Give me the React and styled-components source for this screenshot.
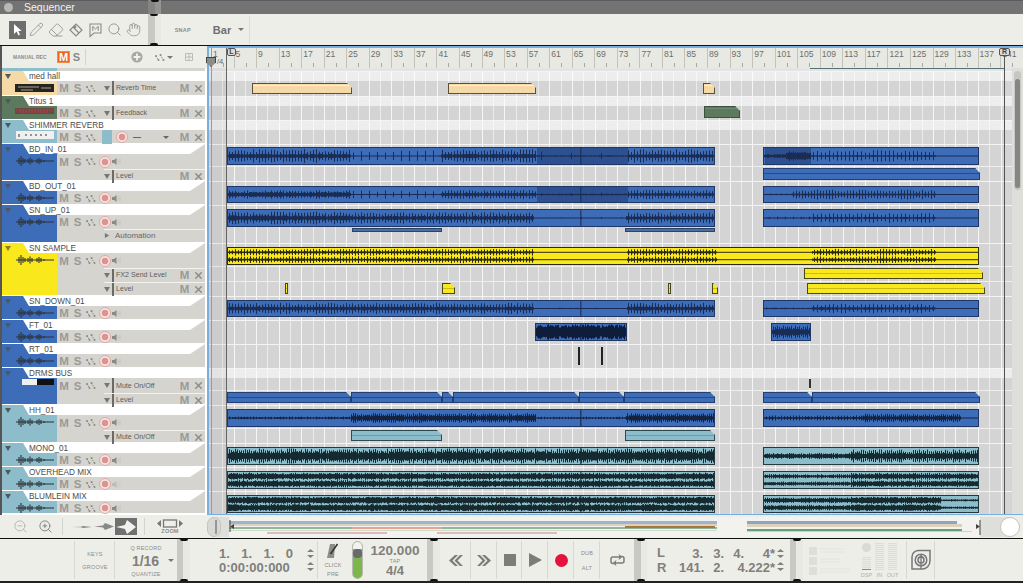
import styled, { createGlobalStyle } from "styled-components";
import { Pencil, Eraser, Search, Hand, ZoomIn, ZoomOut, X } from "lucide-react";

const GlobalStyle = createGlobalStyle`
  html, body { margin: 0; padding: 0; background: #eeeee8; overflow: hidden; }
  * { box-sizing: border-box; }
`;

const PANEL = "#d6d4ce";
const BLUE = "#3d6cb8";
const TEAL = "#8dbccb";
const TIMELINE_LEFT = 209;

const Page = styled.div`
  width: 1023px;
  height: 583px;
  display: flex;
  flex-direction: column;
  overflow: hidden;
  font-family: "Liberation Sans", Arial, sans-serif;
  background: #eeeee8;
  color: #666;
`;

/* ---- title + tools ---- */
const TitleBar = styled.div`
  height: 14px;
  flex: none;
  display: flex;
  align-items: center;
  background: linear-gradient(#5c5c5c 0 1px, #737373 1px);
  padding-left: 4px;
  color: #f2f2f2;
  font-size: 10.5px;
`;
const TitleDot = styled.span`
  width: 9px;
  height: 9px;
  border-radius: 50%;
  background: #b8b8b6;
  margin-right: 11px;
  flex: none;
`;
const TitleName = styled.span`
  width: 124px;
  flex: none;
`;
const Toolbar = styled.div`
  height: 32px;
  flex: none;
  display: flex;
  align-items: center;
  border-bottom: 1px solid #111;
  background: #eeeee8;
  padding-left: 9px;
`;
const ToolSlot = styled.div`
  width: 17px;
  height: 18px;
  margin-right: 2.4px;
  display: flex;
  align-items: center;
  justify-content: center;
  color: #8a8a86;
  background: ${(p) => (p.$active ? "#6e6e6c" : "transparent")};
  flex: none;
`;
const Groove = styled.div`
  position: relative;
  width: 13px;
  align-self: stretch;
  flex: none;
  margin-left: ${(p) => p.$before || 0}px;
  background: ${(p) =>
    p.$dark
      ? "linear-gradient(90deg, #848482 50%, #949492 50%)"
      : "linear-gradient(90deg, #c9c9c3 50%, #e9e9e3 50%)"};
  &::before, &::after {
    content: "";
    position: absolute;
    left: 50%;
    margin-left: -4px;
    width: 8px;
    height: 2px;
    background: #111;
  }
  &::before { top: 0; border-radius: 0 0 4px 4px; }
  &::after { bottom: 0; border-radius: 4px 4px 0 0; display: ${(p) => (p.$dark ? "none" : "block")}; }
`;
const TinyLabel = styled.span`
  font-size: 5.5px;
  font-weight: ${(p) => (p.$bold ? 700 : 400)};
  color: #8c8c88;
  letter-spacing: 0.2px;
  white-space: nowrap;
`;
const ManualLabel = styled(TinyLabel)`
  width: 44px;
  flex: none;
  font-size: 5px;
  letter-spacing: 0;
`;
const SnapArea = styled.div`
  display: flex;
  align-items: center;
  height: 28px;
  padding-left: 14px;
  padding-right: 5px;
  border-right: 1px solid #dcdcd6;
`;
const SnapValue = styled.span`
  font-size: 11px;
  font-weight: 700;
  color: #70706c;
  margin-left: 22px;
  margin-right: 7px;
`;
const Caret = styled.span`
  width: 0;
  height: 0;
  border-left: 3px solid transparent;
  border-right: 3px solid transparent;
  border-top: 3px solid ${(p) => p.$color || "#777"};
  flex: none;
`;

/* ---- sequencer ---- */
const Sequencer = styled.div`
  display: flex;
  height: 469px;
  flex: none;
`;
const TrackPanel = styled.div`
  width: 207px;
  flex: none;
  background: #fff;
  display: flex;
  flex-direction: column;
  border-left: 2px solid #555;
  padding-right: 2px;
`;
const PanelHeader = styled.div`
  height: 22px;
  flex: none;
  margin-right: -2px;
  display: flex;
  align-items: center;
  background: #eeeee8;
  padding-left: 11px;
`;
const ManualM = styled.span`
  width: 13px;
  height: 12px;
  flex: none;
  background: #f0641e;
  border: 1px solid #f58a4e;
  color: #fff;
  font-size: 11px;
  font-weight: 700;
  line-height: 10px;
  text-align: center;
`;
const ManualS = styled.span`
  width: 16px;
  flex: none;
  text-align: center;
  font-size: 11px;
  font-weight: 700;
  color: #8a8a86;
  border-right: 1px solid #d4d4ce;
  padding-right: 2px;
  height: 16px;
  line-height: 16px;
`;
const HeaderGap = styled.span`
  width: ${(p) => p.$w}px;
  flex: none;
`;
const TrackStub = styled.div`
  height: 3px;
  flex: none;
  background: linear-gradient(90deg, ${TEAL} 55px, ${PANEL} 55px);
`;
const TrackBox = styled.div`
  height: ${(p) => p.$height}px;
  flex: none;
  display: flex;
  flex-direction: column;
  background: #fff;
  padding-bottom: 1px;
`;
const TrackTitle = styled.div`
  height: 10px;
  flex: none;
  display: flex;
  align-items: center;
  font-size: 8.2px;
  color: #4c4c4c;
  white-space: nowrap;
`;
const TitleTab = styled.div`
  width: 27px;
  height: 10px;
  flex: none;
  background: ${(p) => p.$color};
  clip-path: polygon(0 0, 21px 0, 27px 100%, 0 100%);
  padding: 3px 0 0 3px;
`;
const Triangle = styled.span`
  display: block;
  width: 0;
  height: 0;
  border-left: 3px solid transparent;
  border-right: 3px solid transparent;
  border-top: 5px solid ${(p) => p.$color || "#666"};
  transform: ${(p) => (p.$side ? "rotate(-90deg) scale(.85)" : "none")};
`;
const TrackName = styled.span`
  flex: 1;
`;
const Chamfer = styled.div`
  width: 15px;
  height: 10px;
  background: ${PANEL};
  clip-path: polygon(100% 0, 100% 100%, 0 100%);
`;
const TrackBody = styled.div`
  flex: 1;
  display: flex;
  min-height: 0;
`;
const Swatch = styled.div`
  width: 55px;
  flex: none;
  background: ${(p) => p.$color};
  display: flex;
  justify-content: flex-end;
  padding: 1px 3px 0 0;
`;
const Controls = styled.div`
  flex: 1;
  display: flex;
  flex-direction: column;
  background: ${PANEL};
`;
const ControlRow = styled.div`
  height: ${(p) => (p.$height ? `${p.$height}px` : "auto")};
  flex: ${(p) => (p.$height ? "none" : 1)};
  display: flex;
  align-items: center;
`;
const SubRow = styled(ControlRow)`
  justify-content: flex-end;
  position: relative;
  &::before {
    content: "";
    position: absolute;
    top: 0;
    left: 47px;
    right: 0;
    height: 1px;
    background: #f2f2ee;
  }
`;
const Flag = styled.span`
  width: ${(p) => p.$w || 13}px;
  flex: none;
  text-align: center;
  font-size: 11.5px;
  font-weight: 700;
  color: #9a9a96;
  line-height: 14px;
`;
const IconSlot = styled.span`
  width: ${(p) => p.$w || 13}px;
  flex: none;
  display: flex;
  align-items: center;
  justify-content: center;
`;
const RecButton = styled.span`
  width: 12px;
  height: 12px;
  border-radius: 50%;
  border: 1px solid #e8a6a4;
  background: radial-gradient(circle, #dd9390 0 3px, #efe5e0 3.6px);
  flex: none;
`;
const LaneControls = styled.div`
  width: 103px;
  flex: none;
  margin-left: auto;
  display: flex;
  align-items: center;
  height: 100%;
`;
const LaneBar = styled.span`
  width: 2px;
  height: 100%;
  background: #6a6a68;
  margin: 0 1px 0 0;
  flex: none;
`;
const LaneLabel = styled.span`
  flex: 1;
  font-size: 7.1px;
  color: #5e5e5c;
  white-space: nowrap;
  padding-left: 1px;
`;
const AutomationLabel = styled.span`
  flex: 1;
  font-size: 8px;
  color: #666;
  padding-left: 3px;
`;
const ShimmerBlock = styled.span`
  width: 10px;
  height: 100%;
  background: ${TEAL};
  margin-right: 3px;
  flex: none;
`;
const ShimmerDash = styled.span`
  width: 8px;
  height: 1px;
  background: #666;
  margin: 0 22px 0 5px;
  flex: none;
`;
const RowFill = styled.span`
  flex: 1;
`;

/* ---- timeline ---- */
const Timeline = styled.div`
  position: relative;
  flex: 1;
  display: flex;
  flex-direction: column;
  border-top: 2px solid #78aee0;
  border-left: 2px solid #78aee0;
  border-bottom: 1px solid #78aee0;
  background: #eee;
  min-width: 0;
`;
const Ruler = styled.div`
  height: 20px;
  flex: none;
  display: flex;
  padding-left: 2px;
  background: #e9e9e3;
  overflow: hidden;
`;
const RulerCell = styled.div`
  width: 22.56px;
  flex: none;
  border-left: 1px solid #c3c3bd;
  padding: 1px 0 0 1px;
  font-size: 8.6px;
  line-height: 10px;
  color: #6e6e6a;
  background: linear-gradient(#a8a8a2, #a8a8a2) 11px 15px / 1px 4px no-repeat;
`;
const TimelineBody = styled.div`
  flex: 1;
  display: flex;
  min-height: 0;
`;
const Lanes = styled.div`
  flex: 1;
  display: flex;
  flex-direction: column;
  min-width: 0;
  overflow: hidden;
`;
const gridLines = `
  repeating-linear-gradient(90deg, transparent 0 2px, rgba(255,255,255,.8) 2px 3px, transparent 3px 22.56px),
  repeating-linear-gradient(90deg, transparent 0 13.28px, rgba(255,255,255,.55) 13.28px 14.28px, transparent 14.28px 22.56px)
`;
const LaneStub = styled.div`
  height: 3px;
  flex: none;
  background: #e4e4e4;
  position: relative;
`;
const LoopLine = styled.div`
  position: absolute;
  top: 0;
  left: ${810 - TIMELINE_LEFT}px;
  width: 194px;
  height: 1px;
  background: #56707a;
`;
const Lane = styled.div`
  position: relative;
  height: ${(p) => p.$height}px;
  flex: none;
  border-top: 1px solid #f4f4f4;
  background-image: ${gridLines},
    linear-gradient(#ededed 0 ${(p) => (p.$band ? 9 : 0)}px, #d4d4d4 ${(p) => (p.$band ? 9 : 0)}px);
`;
const LaneDivider = styled.div`
  position: absolute;
  left: 0;
  right: 0;
  top: ${(p) => p.$top}px;
  height: 1px;
  background: #efefef;
`;
const Clip = styled.div`
  position: absolute;
  left: ${(p) => p.$x - TIMELINE_LEFT}px;
  width: ${(p) => p.$w}px;
  top: ${(p) => p.$top}px;
  height: ${(p) => p.$h}px;
  background: ${(p) => p.$fill};
  border: 1px solid ${(p) => p.$edge};
  overflow: hidden;
  ${(p) => p.$chamfer && "clip-path: polygon(0 0, calc(100% - 5px) 0, 100% 5px, 100% 100%, 0 100%);"}
`;
const ClipLine = styled.div`
  height: 1px;
  margin-top: ${(p) => p.$gap}px;
  background: ${(p) => p.$color};
`;
const ScrollTrack = styled.div`
  width: 11px;
  flex: none;
  background: #dededa;
  padding: 2px 2px 0 2px;
`;
const ScrollCapsule = styled.div`
  height: 119px;
  margin-top: 1px;
  border-radius: 4px;
  background: #c6c6c2;
  padding: 8px 1px 2px;
`;
const ScrollThumb = styled.div`
  height: 100%;
  border-radius: 3px;
  background: #858583;
`;
const Locator = styled.div`
  position: absolute;
  top: 0;
  bottom: 0;
  left: ${(p) => p.$x - TIMELINE_LEFT}px;
  width: 1px;
  background: ${(p) => p.$color};
  pointer-events: none;
`;
const OutsideRange = styled.div`
  position: absolute;
  top: 20px;
  bottom: 0;
  left: 0;
  width: 17px;
  background: rgba(110, 110, 110, 0.08);
`;
const Marker = styled.div`
  position: absolute;
  top: 0;
  left: ${(p) => p.$x - TIMELINE_LEFT}px;
  width: ${(p) => p.$w}px;
  height: 8px;
  border: 1px solid #555;
  border-radius: 2px;
  background: #dcdcd6;
  font-size: 7px;
  font-weight: 700;
  line-height: 6px;
  text-align: center;
  color: #444;
`;
const PositionFlag = styled.div`
  position: absolute;
  top: 9px;
  left: -3px;
  width: 10px;
  height: 10px;
  background: #8c8c88;
  border: 1px solid #444;
  clip-path: polygon(0 0, 100% 0, 100% 55%, 50% 100%, 0 55%);
`;
const Signature = styled.span`
  position: absolute;
  top: 9px;
  left: 8px;
  font-size: 7.5px;
  color: #666;
`;

/* ---- zoom strip ---- */
const ZoomStrip = styled.div`
  height: 23px;
  flex: none;
  display: flex;
  align-items: center;
  background: #eeeee8;
  border-bottom: 1px solid #111;
  box-sizing: content-box;
  padding-left: 13px;
`;
const ZoomGroup = styled.div`
  display: flex;
  align-items: center;
  height: 17px;
  gap: ${(p) => p.$gap || 0}px;
  padding-right: ${(p) => p.$right || 0}px;
  margin-right: ${(p) => p.$after || 0}px;
  border-right: 1px solid #d4d4ce;
  flex: none;
`;
const SizeOption = styled.span`
  width: 22px;
  height: 17px;
  display: flex;
  align-items: center;
  justify-content: center;
  background: ${(p) => (p.$active ? "#707070" : "transparent")};
  flex: none;
`;
const ZoomLabel = styled.div`
  width: 26px;
  display: flex;
  flex-direction: column;
  align-items: center;
  line-height: 6px;
  flex: none;
`;
const Overview = styled.div`
  position: relative;
  flex: none;
  width: 813px;
  height: 20px;
  margin-left: 24px;
  background: #dededa;
  border-radius: 10px;
`;
const OverviewCap = styled.span`
  position: absolute;
  top: 0;
  bottom: 0;
  ${(p) => (p.$end ? "right: 0; width: 20px;" : "left: 0; width: 14px;")};
  border-radius: 10px;
  background: ${(p) => (p.$end ? "#fff" : "#d8d8d4")};
  border: 1px solid #c4c4c0;
`;

/* ---- transport ---- */
const Transport = styled.div`
  height: 44px;
  flex: none;
  display: flex;
  border-bottom: 2px solid #222;
  background: #eeeee8;
`;
const Section = styled.div`
  width: ${(p) => p.$width}px;
  flex: none;
  display: flex;
  flex-direction: ${(p) => p.$dir || "column"};
  align-items: center;
  justify-content: ${(p) => p.$justify || "space-around"};
  padding: ${(p) => p.$pad || "5px 0"};
  position: relative;
`;
const Lined = styled(Section)`
  &::after {
    content: "";
    position: absolute;
    right: 0;
    top: 2px;
    bottom: 2px;
    width: 1px;
    background: #d8d8d2;
  }
`;
const BigReadout = styled.div`
  font-size: ${(p) => p.$size || 13}px;
  font-weight: 700;
  color: #80807c;
  line-height: 14px;
  white-space: nowrap;
`;
const ReadoutLine = styled.div`
  width: ${(p) => p.$width}px;
  display: flex;
  justify-content: space-between;
  font-size: 13px;
  font-weight: 700;
  color: #80807c;
  line-height: 13px;
  white-space: nowrap;
`;
const ReadoutCell = styled.span`
  width: ${(p) => p.$w}px;
  flex: none;
  text-align: right;
`;
const QuantRow = styled.div`
  display: flex;
  align-items: center;
  gap: 9px;
  padding-left: 14px;
`;
const Steppers = styled.div`
  display: flex;
  flex-direction: column;
  gap: 4px;
  flex: none;
  margin-left: ${(p) => p.$before}px;
`;
const PositionBox = styled.div`
  display: flex;
  align-items: center;
  width: 100%;
  height: 100%;
  padding-left: 29px;
`;
const PositionText = styled.div`
  display: flex;
  flex-direction: column;
  gap: 1px;
  flex: none;
`;
const Pill = styled.div`
  width: 11px;
  height: 38px;
  border-radius: 6px;
  border: 1px solid #b8b8b4;
  background: #7db749;
  overflow: hidden;
  flex: none;
`;
const PillTop = styled.div`
  height: 7px;
  background: #f2f2ee;
`;
const PillKnob = styled.div`
  height: 9px;
  border-radius: 4px;
  background: #6a6a6c;
`;
const RecordDot = styled.span`
  width: 13px;
  height: 13px;
  border-radius: 50%;
  background: #e6123d;
`;
const StopBox = styled.span`
  width: 12px;
  height: 12px;
  background: #7c7c78;
`;
const PlayShape = styled.span`
  width: 0;
  height: 0;
  border-top: 7.5px solid transparent;
  border-bottom: 7.5px solid transparent;
  border-left: 13px solid #7c7c78;
`;
const LocatorLetters = styled.div`
  font-size: 13px;
  font-weight: 700;
  color: #80807c;
  line-height: 15px;
  width: 32px;
  padding-left: 10px;
  flex: none;
`;
const FadedSquares = styled.div`
  display: flex;
  flex-direction: column;
  gap: 2px;
  width: 59px;
  padding-left: 6px;
  flex: none;
`;
const FadedLine = styled.div`
  display: flex;
  gap: 3px;
  align-items: center;
`;
const FadedSquare = styled.span`
  width: 8px;
  height: 8px;
  background: #dededa;
`;
const FadedText = styled.span`
  width: ${(p) => p.$w}px;
  height: 5px;
  background: repeating-linear-gradient(#e8e8e4 0 2px, transparent 2px 3px);
`;
const MeterBank = styled.div`
  display: flex;
  gap: 4px;
  height: 100%;
  flex: none;
`;
const MeterColumn = styled.div`
  display: flex;
  flex-direction: column;
  align-items: center;
  justify-content: flex-end;
  gap: 2px;
  width: 9px;
`;
const MeterBar = styled.div`
  width: 9px;
  height: ${(p) => p.$height}px;
  background: repeating-linear-gradient(#deded9 0 1px, #eaeae6 1px 2px);
  border-bottom: ${(p) => (p.$level ? "1px solid #8a8a86" : "none")};
`;
const MeterKnob = styled.span`
  width: 9px;
  height: 9px;
  border-radius: 50%;
  background: #d9d9d5;
  margin-bottom: 3px;
`;
const MeterText = styled.span`
  font-size: 5.5px;
  color: #b0b0ac;
  line-height: 6px;
`;

/* ---- small drawings ---- */
const rng = (seed) => {
  let s = seed;
  return () => {
    s = (s * 16807) % 2147483647;
    return s / 2147483647;
  };
};

const Wave = ({ x, w, h, sections, stereo, color, seed, seam }) => {
  const next = rng(seed);
  const inner = h - 2;
  const centers = stereo ? [inner * 0.27, inner * 0.73] : [inner / 2];
  const half = (stereo ? inner * 0.25 : inner * 0.5) - 0.3;
  let d = "";
  for (let i = 0; i < w; i++) {
    const gx = x + i;
    const sec = sections.find((s) => gx < s[0]) || [0, 0, 0, 1];
    const hit = gx % sec[3] < 1;
    for (const c of centers) {
      const a = Math.max(0.5, ((hit ? sec[1] : sec[2]) * (0.55 + 0.45 * next())) * half);
      d += `M${i + 0.5} ${(c - a).toFixed(1)}V${(c + a).toFixed(1)}`;
    }
  }
  const shaded = sections.filter((s) => s[4]);
  return (
    <svg width={w} height={inner} style={{ display: "block" }}>
      {shaded.map((s) => (
        <rect key={s[0]} x={s[4] - x} y="0" width={s[0] - s[4]} height={inner} fill="#14264e" opacity="0.38" />
      ))}
      <path d={d} stroke={color} strokeWidth="1" fill="none" />
      {seam && x < 579 && x + w > 579 && <rect x={579 - x} y="0" width="1.5" height={inner} fill={color} opacity="0.7" />}
    </svg>
  );
};

const SwatchWave = ({ color = "#2c3036" }) => (
  <svg width="38" height="12" viewBox="0 0 38 12">
    <path
      d="M0 6H38M3 3V9M5 1V11M7 3V9M9 4V8M12 4V8M14 2.5V9.5M16 4V8M21 4V8M23 3V9M25 4V8M28 5V7"
      stroke={color}
      strokeWidth="1.1"
      fill="none"
    />
  </svg>
);

const Device = ({ type }) => {
  if (type === "hall")
    return (
      <svg width="39" height="8" style={{ marginTop: 2 }}>
        <rect width="39" height="8" fill="#26241f" />
        <path d="M3 3H24M26 4H36M6 6H18" stroke="#a8a296" strokeWidth="1" />
      </svg>
    );
  if (type === "titus")
    return (
      <svg width="39" height="6" style={{ marginTop: 1 }}>
        <rect width="39" height="6" fill="#6b4a44" />
        <path d="M1 2H38M4 4H34" stroke="#c23c46" strokeWidth="1" strokeDasharray="2 1" />
      </svg>
    );
  if (type === "shimmer")
    return (
      <svg width="38" height="8">
        <rect width="38" height="8" fill="#f0f0ee" />
        <path d="M3 3V6M10 3V5M15 3V5M20 3V5M25 3V5M30 3V5" stroke="#555" strokeWidth="1.2" />
      </svg>
    );
  return (
    <svg width="32" height="6">
      <rect width="32" height="6" fill="#f0f0ee" />
      <rect x="15" width="17" height="6" fill="#111" />
    </svg>
  );
};

const AutoIcon = ({ color = "#8a8a86" }) => (
  <svg width="10" height="9" viewBox="0 0 10 9" style={{ flex: "none" }}>
    <path d="M1 3L3.5 7M5.5 2L8 6.5" stroke={color} strokeWidth="1" fill="none" strokeDasharray="1.4 .9" />
    <circle cx="1" cy="3" r="1" fill={color} />
    <circle cx="5.5" cy="2" r="1" fill={color} />
    <circle cx="3.5" cy="7" r="1" fill={color} />
    <circle cx="8.5" cy="7" r="1" fill={color} />
  </svg>
);

const SpeakerIcon = ({ faded }) => (
  <svg width="10" height="9" viewBox="0 0 10 9" opacity={faded ? 0.3 : 1}>
    <path d="M0 3H2L4.5 1V8L2 6H0Z" fill="#8a8a86" />
    <path d="M6 2.5V6.5M8 1.5V7.5" stroke="#c4c4be" strokeWidth="1" />
  </svg>
);

const CloseIcon = () => <X size={11} strokeWidth={3.4} color="#8e8e8a" />;

const ArrowTool = () => (
  <svg width="11" height="13" viewBox="0 0 11 13">
    <path d="M2 1V11L4.6 8.6L6.4 12.4L8 11.6L6.3 8H9.6Z" fill="#fff" />
  </svg>
);

const TagTool = () => (
  <svg width="16" height="16" viewBox="0 0 16 16" fill="none" stroke="#8a8a86" strokeWidth="1.2">
    <path d="M2 8L8 2L14 8L8 14Z" />
    <path d="M5 5L11 11" />
    <circle cx="7" cy="5" r="0.8" />
  </svg>
);

const BubbleTool = () => (
  <svg width="15" height="16" viewBox="0 0 15 16" fill="none" stroke="#8a8a86" strokeWidth="1.1">
    <path d="M2 2H13V11H6L2 14.5Z" />
    <path d="M4.8 8.8V4.4L7.5 7L10.2 4.4V8.8" strokeWidth="1" />
  </svg>
);

const PlusDisc = () => (
  <svg width="12" height="12" viewBox="0 0 12 12" style={{ flex: "none" }}>
    <circle cx="6" cy="6" r="5.6" fill="#a8a8a4" />
    <path d="M6 2.6V9.4M2.6 6H9.4" stroke="#f2f2ee" strokeWidth="1.8" />
  </svg>
);

const GridIcon = () => (
  <svg width="8" height="8" viewBox="0 0 8 8" fill="none" stroke="#bdbdb8" strokeWidth="1" style={{ flex: "none" }}>
    <path d="M.5 .5H7.5V7.5H.5ZM4 .5V7.5M.5 4H7.5" />
  </svg>
);

const Stepper = ({ color = "#80807c" }) => (
  <svg width="7" height="9" viewBox="0 0 7 9" fill={color}>
    <path d="M3.5 0L7 3H0ZM3.5 9L0 6H7Z" />
  </svg>
);

const SizeWave = ({ w, h, color }) => (
  <svg width={w} height={h} viewBox={`0 0 ${w} ${h}`}>
    <path d={`M0 ${h / 2}L${w * 0.45} ${h * 0.35}L${w * 0.55} 0L${w} ${h / 2}L${w * 0.55} ${h}L${w * 0.45} ${h * 0.65}Z`} fill={color} />
  </svg>
);

const ZoomArrows = () => (
  <svg width="26" height="9" viewBox="0 0 26 9">
    <path d="M0 4.5L4 1V8ZM26 4.5L22 1V8Z" fill="#777" />
    <rect x="6.5" y="1" width="13" height="7" fill="none" stroke="#777" strokeWidth="1.3" />
  </svg>
);

// thin coloured summary of all tracks
const OverviewLines = () => (
  <svg width="813" height="20" style={{ position: "absolute", left: 0, top: 0 }}>
    <rect x="22" y="0" width="751" height="20" fill="#f2f2ee" />
    {[
      [22, 4, 488, 3, "#9fb3d0"],
      [22, 7, 488, 2, "#dcd2bc"],
      [22, 10, 488, 2, "#8fb89a"],
      [145, 10, 90, 2, "#e3a590"],
      [418, 9, 90, 2, "#a6793f"],
      [22, 13, 488, 1, "#d2d8cc"],
      [60, 15, 120, 2, "#dcbcb8"],
      [230, 15, 120, 2, "#dcbcb8"],
      [540, 4, 210, 3, "#8ea4c2"],
      [540, 7, 215, 3, "#dcd2bc"],
      [540, 12, 215, 2, "#67a075"],
      [540, 14, 225, 1, "#cfcfc8"],
    ].map(([x, y, w, h, c], i) => (
      <rect key={i} x={x} y={y} width={w} height={h} fill={c} />
    ))}
    <path d="M9 3V17" stroke="#555" strokeWidth="1" />
    <path d="M23 3V15M773 3V18" stroke="#444" strokeWidth="1" />
    <path d="M27 7L23 9.5L27 12ZM769 7L773 9.5L769 12Z" fill="#444" />
  </svg>
);

const LoopIcon = () => (
  <svg width="15" height="12" viewBox="0 0 15 12" fill="none" stroke="#7c7c78" strokeWidth="1.5">
    <path d="M4 9.5H3A2 2 0 0 1 1 7.5V5A2 2 0 0 1 3 3H10" />
    <path d="M11 2.5H12A2 2 0 0 1 14 4.5V7A2 2 0 0 1 12 9H5" />
    <path d="M9 .5L11.5 3L9 5.5M6 6.5L3.5 9L6 11.5" strokeWidth="1" fill="#7c7c78" />
  </svg>
);

const Chevrons = ({ flip }) => (
  <svg width="14" height="11" viewBox="0 0 14 11" style={{ transform: flip ? "scaleX(-1)" : "none" }} fill="#7c7c78">
    <path d="M0 5.5L6 0H9L3.5 5.5L9 11H6ZM5.5 5.5L11 0H14L8.5 5.5L14 11H11Z" />
  </svg>
);

const MetronomeIcon = () => (
  <svg width="12" height="16" viewBox="0 0 12 16">
    <path d="M3 1H8L7 15H0Z" fill="#8c8c88" />
    <path d="M3.5 11L10.5 1" stroke="#333" strokeWidth="1.6" />
  </svg>
);

const LogoIcon = () => (
  <svg width="20" height="22" viewBox="0 0 20 22" fill="none" stroke="#777" strokeWidth="1.5">
    <path d="M7 1.5H19V12A8 8 0 0 1 11 20H1V8A6.5 6.5 0 0 1 7 1.5Z" />
    <circle cx="10" cy="11" r="5.8" />
    <circle cx="10" cy="11" r="3" />
    <path d="M10 20V7M8 9L10 6.5L12 9" strokeWidth="1.3" />
  </svg>
);

/* ---- data: [until x, peak, floor, hit period, shaded from x] ---- */
const kick = [
  [350, 0.9, 0.3, 3], [440, 0.75, 0.08, 8], [535, 0.9, 0.28, 3], [627, 0.55, 0.1, 30, 536], [716, 0.9, 0.25, 3],
  [785, 0.25, 0.2, 1, 764], [810, 0.7, 0.5, 2, 785], [935, 0.75, 0.12, 4], [980, 0.04, 0.04, 1],
];
const kickOut = [
  [350, 0.6, 0.35, 3], [440, 0.6, 0.06, 8], [535, 0.65, 0.25, 3], [627, 0.32, 0.12, 30, 536], [716, 0.65, 0.22, 3],
  [790, 0.16, 0.1, 5], [935, 0.7, 0.15, 3], [980, 0.04, 0.04, 1],
];
const snareUp = [
  [350, 0.85, 0.35, 3], [533, 0.75, 0.28, 3], [625, 0.14, 0.06, 20], [716, 0.75, 0.25, 3],
  [810, 0.2, 0.1, 8], [935, 0.65, 0.15, 4], [980, 0.04, 0.04, 1],
];
const sample = [
  [533, 0.95, 0.35, 3], [626, 0.06, 0.06, 1], [716, 0.95, 0.35, 3], [811, 0.06, 0.06, 1], [935, 0.95, 0.35, 3], [980, 0.06, 0.06, 1],
];
const snareDown = [
  [533, 0.8, 0.28, 3], [626, 0.1, 0.08, 6], [716, 0.8, 0.28, 3],
  [810, 0.14, 0.1, 9], [935, 0.7, 0.2, 4], [980, 0.04, 0.04, 1],
];
const tom = [[627, 1, 0.92, 1], [812, 0.85, 0.45, 2]];
const hats = [
  [350, 0.2, 0.12, 3], [535, 0.65, 0.35, 2], [625, 0.18, 0.1, 3], [716, 0.65, 0.35, 2],
  [860, 0.35, 0.15, 3], [960, 0.55, 0.28, 2], [980, 0.04, 0.04, 1],
];
const mono = [[716, 1, 0.6, 2], [850, 0.4, 0.3, 2], [980, 0.85, 0.45, 2]];
const overhead = [[716, 1, 0.8, 2], [850, 0.6, 0.4, 2], [980, 0.95, 0.7, 2]];
const blumlein = [[716, 1, 0.95, 2], [850, 0.8, 0.6, 2], [940, 1, 0.9, 2], [980, 0.35, 0.25, 2]];

const peach = { fill: "#f5d9a6", edge: "#5d503a", line: "#fff0d0", gap: 1 };
const moss = { fill: "#5d7a5f", edge: "#3f4f40", line: "#6d8a6f", gap: 1 };
const blueAuto = { fill: BLUE, edge: "#233f70", line: "#2a4a84", gap: 4 };
const barAuto = { fill: "#4a6fa0", edge: "#2d4468", line: "#4a6fa0", gap: 0 };
const tealAuto = { fill: "#8dbccb", edge: "#2c4a52", line: "#6d9cab", gap: 4 };
const yellowAuto = { fill: "#f8e81c", edge: "#4a4712", line: "#c9bc18", gap: 4 };
const blackTick = { fill: "#222", edge: "#222", line: "#222", gap: 0 };
const blueWave = { fill: BLUE, edge: "#1e3766", color: "#1a2c52", seam: true };
const yellowWave = { fill: "#f8e81c", edge: "#2e2c0e", color: "#2a2a16" };
const tealWave = { fill: "#8dbccb", edge: "#21393f", color: "#16292e", seam: true };

const pair = (y, h, sections, look, seed, stereo) => [
  { x: 227, w: 488, y, h, sections, look, seed, stereo },
  { x: 763, w: 216, y, h, sections, look, seed: seed + 11, stereo },
];
const auto = (x, w, y, h, look) => ({ x, w, y, h, look, auto: true });

const tracks = [
  { name: "med hall", color: "#f5d9a6", height: 25, band: true, device: "hall", label: "Reverb Time", clips: [auto(252, 100, 83, 11, peach), auto(448, 88, 83, 11, peach), auto(703, 12, 83, 11, peach)] },
  { name: "Titus 1", color: "#5d7a5f", height: 24, band: true, device: "titus", label: "Feedback", clips: [auto(704, 36, 106, 12, moss)] },
  { name: "SHIMMER REVERB", color: TEAL, height: 24, band: true, device: "shimmer", shimmer: true, clips: [] },
  { name: "BD_IN_01", color: BLUE, height: 37, audio: true, sub: ["Level"], clips: [...pair(147, 18, kick, blueWave, 17), auto(763, 217, 168, 12, blueAuto)] },
  { name: "BD_OUT_01", color: BLUE, height: 24, audio: true, clips: pair(186, 17, kickOut, blueWave, 29) },
  { name: "SN_UP_01", color: BLUE, height: 38, audio: true, automation: true, clips: [...pair(209, 18, snareUp, blueWave, 41), auto(352, 90, 228, 4, barAuto), auto(625, 90, 228, 4, barAuto)] },
  { name: "SN SAMPLE", color: "#f8e81c", height: 53, audio: true, sub: ["FX2 Send Level", "Level"], clips: [
    { x: 227, w: 752, y: 247, h: 18, sections: sample, look: yellowWave, seed: 53, stereo: true },
    auto(804, 179, 268, 11, yellowAuto), auto(807, 178, 283, 11, yellowAuto),
    auto(285, 3, 283, 11, yellowAuto), auto(442, 13, 283, 11, yellowAuto), auto(668, 3, 283, 11, yellowAuto), auto(712, 6, 283, 11, yellowAuto),
  ] },
  { name: "SN_DOWN_01", color: BLUE, height: 24, audio: true, clips: pair(300, 17, snareDown, blueWave, 67) },
  { name: "FT_01", color: BLUE, height: 24, audio: true, clips: [
    { x: 535, w: 92, y: 323, h: 18, sections: tom, look: { ...blueWave, color: "#101d3a" }, seed: 71 },
    { x: 771, w: 40, y: 323, h: 18, sections: tom, look: blueWave, seed: 73 },
  ] },
  { name: "RT_01", color: BLUE, height: 24, audio: true, clips: [auto(578, 2, 347, 18, blackTick), auto(601, 2, 347, 18, blackTick)] },
  { name: "DRMS BUS", color: BLUE, height: 37, band: true, device: "bus", label: "Mute On/Off", sub: ["Level"], clips: [
    auto(809, 2, 379, 9, { fill: "#555", edge: "#333", line: "#555", gap: 0 }),
    auto(227, 124, 392, 11, blueAuto), auto(351, 91, 392, 11, blueAuto), auto(442, 11, 392, 11, blueAuto),
    auto(453, 126, 392, 11, blueAuto), auto(579, 45, 392, 11, blueAuto), auto(624, 91, 392, 11, blueAuto),
    auto(763, 49, 392, 11, blueAuto), auto(812, 168, 392, 11, blueAuto),
  ] },
  { name: "HH_01", color: TEAL, height: 38, audio: true, sub: ["Mute On/Off"], clips: [...pair(409, 18, hats, { ...blueWave, color: "#16233f" }, 83), auto(351, 91, 430, 11, tealAuto), auto(625, 90, 430, 11, tealAuto)] },
  { name: "MONO_01", color: TEAL, height: 24, audio: true, clips: pair(447, 18, mono, tealWave, 97) },
  { name: "OVERHEAD MIX", color: TEAL, height: 24, audio: true, faded: true, clips: pair(471, 18, overhead, tealWave, 101, true) },
  { name: "BLUMLEIN MIX", color: TEAL, height: 23, audio: true, clips: pair(495, 18, blumlein, tealWave, 113, true) },
];

const rulerBars = Array.from({ length: 36 }, (_, i) => 1 + i * 4);

const LaneSet = ({ label }) => (
  <LaneControls>
    <IconSlot $w={10}><Triangle $color="#777" /></IconSlot>
    <LaneBar />
    <LaneLabel>{label}</LaneLabel>
    <Flag>M</Flag>
    <IconSlot $w={14}><CloseIcon /></IconSlot>
  </LaneControls>
);

const TrackHeader = ({ track }) => {
  const { name, color, height, audio, device, label, sub = [], automation, shimmer, faded } = track;
  const rowHeight = sub.length ? 15 : automation ? 14 : null;
  return (
    <TrackBox $height={height}>
      <TrackTitle>
        <TitleTab $color={color}><Triangle $color={color === "#f8e81c" ? "#8a8220" : "#4a5a60"} /></TitleTab>
        <TrackName>{name}</TrackName>
        {audio && <Chamfer />}
      </TrackTitle>
      <TrackBody>
        <Swatch $color={color}>
          {device ? <Device type={device} /> : <SwatchWave />}
        </Swatch>
        <Controls>
          <ControlRow $height={rowHeight}>
            <Flag $w={14}>M</Flag>
            <Flag>S</Flag>
            <IconSlot $w={14}><AutoIcon /></IconSlot>
            {audio && (
              <>
                <IconSlot><RecButton /></IconSlot>
                <IconSlot $w={12}><SpeakerIcon faded={faded} /></IconSlot>
              </>
            )}
            {label && <LaneSet label={label} />}
            {shimmer && (
              <LaneControls>
                <ShimmerBlock />
                <IconSlot><RecButton /></IconSlot>
                <ShimmerDash />
                <Caret $color="#666" />
                <RowFill />
                <Flag>M</Flag>
                <IconSlot $w={14}><CloseIcon /></IconSlot>
              </LaneControls>
            )}
          </ControlRow>
          {automation && (
            <SubRow>
              <LaneControls>
                <IconSlot $w={10}><Triangle $side $color="#777" /></IconSlot>
                <AutomationLabel>Automation</AutomationLabel>
              </LaneControls>
            </SubRow>
          )}
          {sub.map((s) => (
            <SubRow key={s}><LaneSet label={s} /></SubRow>
          ))}
        </Controls>
      </TrackBody>
    </TrackBox>
  );
};

const ClipView = ({ clip, laneTop }) => {
  const { x, w, y, h, look, sections, seed, stereo } = clip;
  const chamfer = clip.auto && w > 5 && h > 6;
  return (
    <Clip $x={x} $w={w} $top={y - laneTop - 1} $h={h} $fill={look.fill} $edge={look.edge} $chamfer={chamfer}>
      {clip.auto ? (
        h > 6 && <ClipLine $color={look.line} $gap={look.gap} />
      ) : (
        <Wave x={x} w={w - 2} h={h} sections={sections} stereo={stereo} color={look.color} seed={seed} seam={look.seam} />
      )}
    </Clip>
  );
};

const laneTops = tracks.reduce((acc, t, i) => [...acc, acc[i] + t.height], [71]);

export default function App() {
  return (
    <Page>
      <GlobalStyle />
      <TitleBar>
        <TitleDot />
        <TitleName>Sequencer</TitleName>
        <Groove $dark />
      </TitleBar>
      <Toolbar>
        <ToolSlot $active><ArrowTool /></ToolSlot>
        <ToolSlot><Pencil size={15} strokeWidth={1.2} /></ToolSlot>
        <ToolSlot><Eraser size={16} strokeWidth={1.2} /></ToolSlot>
        <ToolSlot><TagTool /></ToolSlot>
        <ToolSlot><BubbleTool /></ToolSlot>
        <ToolSlot><Search size={15} strokeWidth={1.3} /></ToolSlot>
        <ToolSlot><Hand size={15} strokeWidth={1.2} /></ToolSlot>
        <Groove $before={3} />
        <SnapArea>
          <TinyLabel $bold>SNAP</TinyLabel>
          <SnapValue>Bar</SnapValue>
          <Caret />
        </SnapArea>
      </Toolbar>
      <Sequencer>
        <TrackPanel>
          <PanelHeader>
            <ManualLabel $bold>MANUAL REC</ManualLabel>
            <ManualM>M</ManualM>
            <ManualS>S</ManualS>
            <HeaderGap $w={45} />
            <PlusDisc />
            <HeaderGap $w={12} />
            <AutoIcon />
            <HeaderGap $w={2} />
            <Caret />
            <HeaderGap $w={12} />
            <GridIcon />
          </PanelHeader>
          <TrackStub />
          {tracks.map((t) => <TrackHeader key={t.name} track={t} />)}
        </TrackPanel>
        <Timeline>
          <Ruler>
            {rulerBars.map((b) => <RulerCell key={b}>{b}</RulerCell>)}
          </Ruler>
          <TimelineBody>
            <Lanes>
              <LaneStub><LoopLine /></LaneStub>
              {tracks.map((t, i) => (
                <Lane key={t.name} $height={t.height} $band={t.band}>
                  {t.sub && t.sub.map((s, n) => (
                    <LaneDivider key={s} $top={t.height - 15 * (t.sub.length - n) - 1} />
                  ))}
                  {t.clips.map((c, n) => <ClipView key={n} clip={c} laneTop={laneTops[i]} />)}
                </Lane>
              ))}
            </Lanes>
            <ScrollTrack>
              <ScrollCapsule><ScrollThumb /></ScrollCapsule>
            </ScrollTrack>
          </TimelineBody>
          <OutsideRange />
          <Locator $x={211} $color="#9a9a9a" />
          <Locator $x={226} $color="#666" />
          <Locator $x={1004} $color="#555" />
          <PositionFlag />
          <Signature>/4</Signature>
          <Marker $x={227} $w={9}>L</Marker>
          <Marker $x={999} $w={11}>R</Marker>
        </Timeline>
      </Sequencer>
      <ZoomStrip>
        <ZoomGroup $gap={10} $right={9} $after={8}>
          <ZoomOut size={15} strokeWidth={1.2} color="#a8a8a4" />
          <ZoomIn size={15} strokeWidth={1.4} color="#777" />
        </ZoomGroup>
        <ZoomGroup $right={7} $after={12}>
          <SizeOption><SizeWave w={20} h={2} color="#888" /></SizeOption>
          <SizeOption><SizeWave w={20} h={7} color="#888" /></SizeOption>
          <SizeOption $active><SizeWave w={20} h={14} color="#f2f2ee" /></SizeOption>
        </ZoomGroup>
        <ZoomLabel>
          <ZoomArrows />
          <TinyLabel $bold>ZOOM</TinyLabel>
        </ZoomLabel>
        <Overview>
          <OverviewCap />
          <OverviewCap $end />
          <OverviewLines />
        </Overview>
      </ZoomStrip>
      <Transport>
        <Lined $width={75} />
        <Lined $width={40} $pad="8px 0 7px">
          <TinyLabel>KEYS</TinyLabel>
          <TinyLabel>GROOVE</TinyLabel>
        </Lined>
        <Section $width={62} $pad="4px 0 3px">
          <TinyLabel>Q RECORD</TinyLabel>
          <QuantRow>
            <BigReadout $size={14}>1/16</BigReadout>
            <Caret />
          </QuantRow>
          <TinyLabel>QUANTIZE</TinyLabel>
        </Section>
        <Groove />
        <Lined $width={128} $pad="0">
          <PositionBox>
            <PositionText>
              <ReadoutLine $width={74}><span>1.</span><span>1.</span><span>1.</span><span>0</span></ReadoutLine>
              <ReadoutLine $width={74}><span>0:00:00:000</span></ReadoutLine>
            </PositionText>
            <Steppers $before={14}><Stepper /><Stepper /></Steppers>
          </PositionBox>
        </Lined>
        <Section $width={30} $pad="2px 0 3px">
          <MetronomeIcon />
          <TinyLabel>CLICK</TinyLabel>
          <TinyLabel>PRE</TinyLabel>
        </Section>
        <Section $width={79} $dir="row" $justify="flex-start" $pad="0 0 0 4px">
          <Pill><PillTop /><PillKnob /></Pill>
          <Section $width={64} $pad="2px 0 1px">
            <BigReadout $size={13.5}>120.000</BigReadout>
            <TinyLabel>TAP</TinyLabel>
            <BigReadout>4/4</BigReadout>
          </Section>
        </Section>
        <Groove />
        <Lined $width={31} $pad="0" $justify="center"><Chevrons /></Lined>
        <Lined $width={26} $pad="0" $justify="center"><Chevrons flip /></Lined>
        <Lined $width={25} $pad="0" $justify="center"><StopBox /></Lined>
        <Lined $width={26} $pad="0" $justify="center"><PlayShape /></Lined>
        <Lined $width={26} $pad="0" $justify="center"><RecordDot /></Lined>
        <Lined $width={26} $pad="7px 0 6px">
          <TinyLabel>DUB</TinyLabel>
          <TinyLabel>ALT</TinyLabel>
        </Lined>
        <Section $width={34} $pad="0" $justify="center"><LoopIcon /></Section>
        <Groove />
        <Section $width={143} $dir="row" $justify="flex-start" $pad="0">
          <LocatorLetters>L<br />R</LocatorLetters>
          <PositionText>
            <ReadoutLine $width={96}>
              <ReadoutCell $w={24}>3.</ReadoutCell>
              <ReadoutCell $w={21}>3.</ReadoutCell>
              <ReadoutCell $w={20}>4.</ReadoutCell>
              <ReadoutCell $w={31}>4*</ReadoutCell>
            </ReadoutLine>
            <ReadoutLine $width={96}>
              <ReadoutCell $w={24}>141.</ReadoutCell>
              <ReadoutCell $w={21}>2.</ReadoutCell>
              <ReadoutCell $w={51}>4.222*</ReadoutCell>
            </ReadoutLine>
          </PositionText>
          <Steppers $before={2}><Stepper /><Stepper /></Steppers>
        </Section>
        <Groove />
        <Lined $width={104} $dir="row" $justify="flex-start" $pad="4px 0 3px">
          <FadedSquares>
            <FadedLine><FadedSquare /><FadedText $w={24} /></FadedLine>
            <FadedLine><FadedSquare /><FadedText $w={20} /></FadedLine>
            <FadedLine><FadedSquare /><FadedText $w={30} /></FadedLine>
          </FadedSquares>
          <MeterBank>
            <MeterColumn>
              <MeterKnob />
              <MeterBar $height={13} $level />
              <MeterText>DSP</MeterText>
            </MeterColumn>
            <MeterColumn>
              <MeterBar $height={27} />
              <MeterText>IN</MeterText>
            </MeterColumn>
            <MeterColumn>
              <MeterBar $height={27} />
              <MeterText>OUT</MeterText>
            </MeterColumn>
          </MeterBank>
        </Lined>
        <Lined $width={28} $pad="0" $justify="center"><LogoIcon /></Lined>
      </Transport>
    </Page>
  );
}
